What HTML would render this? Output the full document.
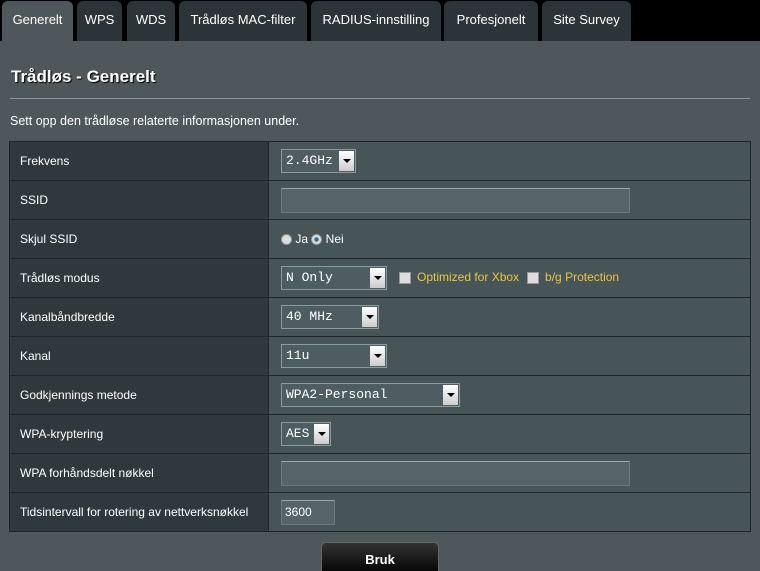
<!DOCTYPE html>
<html><head><meta charset="utf-8"><style>
*{box-sizing:border-box;margin:0;padding:0}
html,body{width:760px;height:571px;overflow:hidden}
body{background:#4e585c;font-family:"Liberation Sans",sans-serif;color:#fff;position:relative}
.top{position:absolute;left:0;top:0;width:760px;height:41px;background:#000}
.tab{position:absolute;top:1px;height:40px;background:#2b3539;border-radius:6px 6px 0 0;font-size:13px;line-height:38px;text-align:center;color:#fff}
.tab.a{background:#4e585c}
h1{position:absolute;left:11px;top:67px;font-size:17px;font-weight:bold;text-shadow:1px 1px 1px #000}
.hr{position:absolute;left:10px;top:98px;width:740px;height:1px;background:#8a9397}
.desc{position:absolute;left:10px;top:114px;font-size:12.5px}
table{position:absolute;left:9px;top:141px;width:742px;border-collapse:collapse}
td{height:39px;border:1px solid #1f2629;font-size:12px;vertical-align:middle}
td.l{width:259px;background:#2f393d;padding-left:10px}
td.v{background:#475458;padding-left:12px}
.sel{display:inline-block;position:relative;height:24px;border:1px solid #8a9a9f;background:#4d5d62;font-family:"Liberation Mono",monospace;font-size:13px;line-height:22px;padding-left:4px;vertical-align:middle}
.sel i{position:absolute;right:1px;top:1px;width:15px;height:20px;background:linear-gradient(#fff,#ccc)}
.sel i:after{content:"";position:absolute;left:4px;top:8px;border:4px solid transparent;border-top:4px solid #000}
.inp{display:inline-block;height:25px;border:1px solid #6a7a7f;border-top-color:#9aa;background:#566468;vertical-align:middle;font-size:12px;line-height:23px;padding-left:3px}
.y{color:#e8c83c}
.cb{display:inline-block;width:12px;height:12px;background:#ddd;border:1px solid #999;vertical-align:middle;margin:0 6px 0 10px}
.rd{display:inline-block;width:11px;height:11px;border-radius:50%;background:#ddd;border:1px solid #999;vertical-align:middle;position:relative}
.btn{position:absolute;left:321px;top:542px;width:118px;height:35px;background:linear-gradient(#333,#000);border:1px solid #666;border-radius:5px;text-align:center;font-weight:bold;font-size:13px;line-height:34px}
</style></head><body>
<div class="top"></div>
<div class="tab a" style="left:2px;width:71px">Generelt</div>
<div class="tab" style="left:77px;width:45px">WPS</div>
<div class="tab" style="left:127px;width:48px">WDS</div>
<div class="tab" style="left:179px;width:128px">Trådløs MAC-filter</div>
<div class="tab" style="left:311px;width:130px">RADIUS-innstilling</div>
<div class="tab" style="left:444px;width:94px">Profesjonelt</div>
<div class="tab" style="left:542px;width:89px">Site Survey</div>
<h1>Trådløs - Generelt</h1>
<div class="hr"></div>
<div class="desc">Sett opp den trådløse relaterte informasjonen under.</div>
<table>
<tr><td class="l">Frekvens</td><td class="v"><span class="sel" style="width:75px">2.4GHz<i></i></span></td></tr>
<tr><td class="l">SSID</td><td class="v"><span class="inp" style="width:349px"></span></td></tr>
<tr><td class="l">Skjul SSID</td><td class="v"><span class="rd"></span> Ja <span class="rd" style="background:radial-gradient(#2a6f9a 30%,#ddd 40%)"></span> Nei</td></tr>
<tr><td class="l">Trådløs modus</td><td class="v"><span class="sel" style="width:106px">N Only<i></i></span><span class="cb" style="margin-left:12px"></span><span class="y">Optimized for Xbox</span><span class="cb" style="margin-left:8px"></span><span class="y">b/g Protection</span></td></tr>
<tr><td class="l">Kanalbåndbredde</td><td class="v"><span class="sel" style="width:98px">40 MHz<i></i></span></td></tr>
<tr><td class="l">Kanal</td><td class="v"><span class="sel" style="width:106px">11u<i></i></span></td></tr>
<tr><td class="l">Godkjennings metode</td><td class="v"><span class="sel" style="width:179px">WPA2-Personal<i></i></span></td></tr>
<tr><td class="l">WPA-kryptering</td><td class="v"><span class="sel" style="width:50px">AES<i></i></span></td></tr>
<tr><td class="l">WPA forhåndsdelt nøkkel</td><td class="v"><span class="inp" style="width:349px"></span></td></tr>
<tr><td class="l">Tidsintervall for rotering av nettverksnøkkel</td><td class="v"><span class="inp" style="width:54px">3600</span></td></tr>
</table>
<div class="btn">Bruk</div>
</body></html>
